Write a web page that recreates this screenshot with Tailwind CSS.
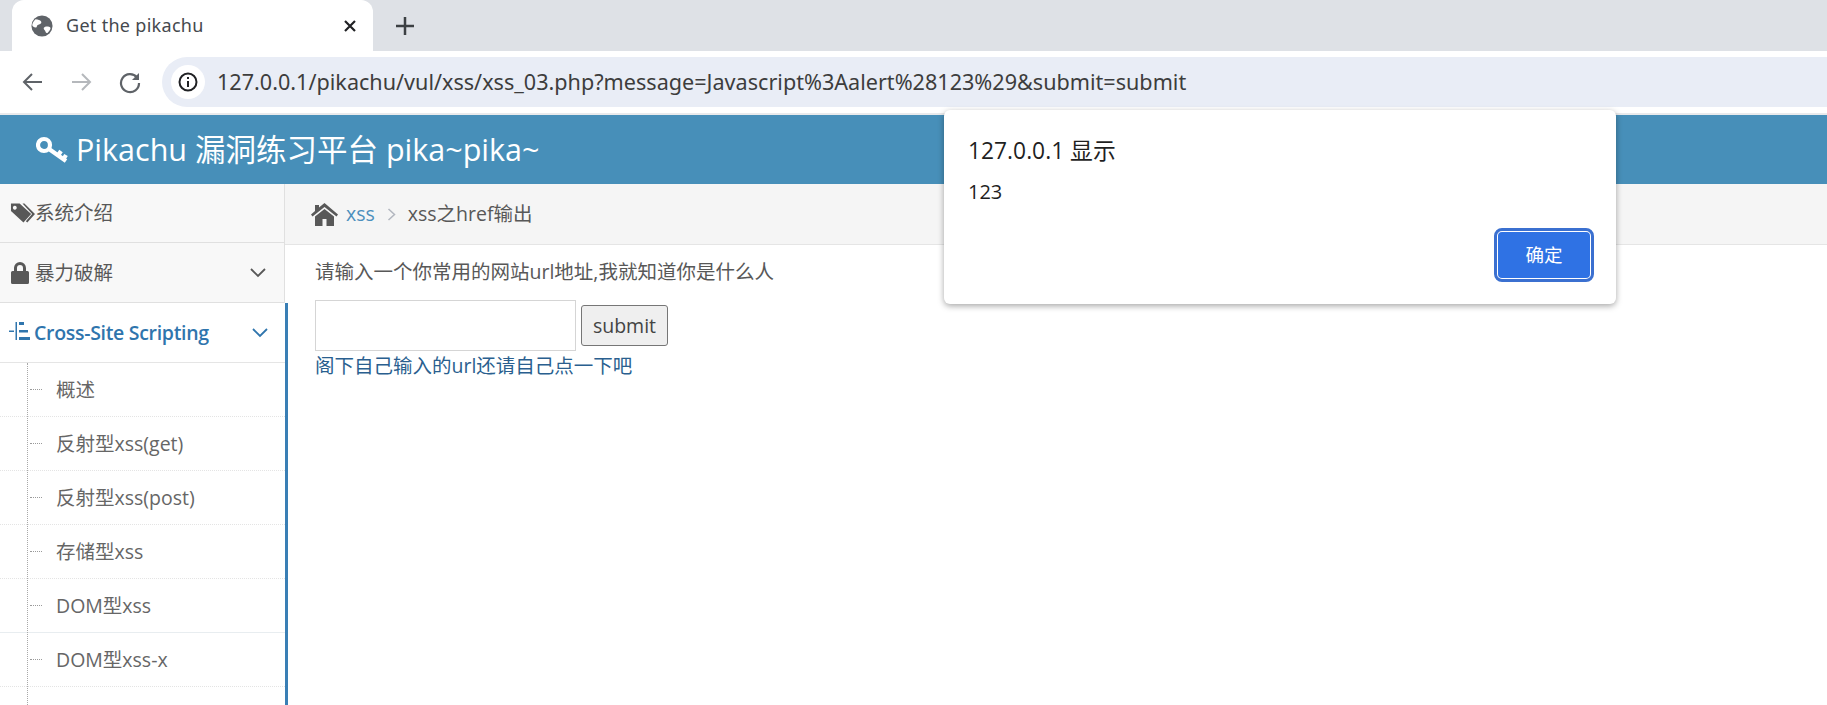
<!DOCTYPE html>
<html lang="zh">
<head>
<meta charset="UTF-8">
<title>Get the pikachu</title>
<script src="https://cdn.jsdelivr.net/npm/@tailwindcss/browser@4"></script>
</head>
<body class="relative w-[1827px] h-[705px] overflow-hidden bg-white font-['Open_Sans','Noto_Sans_CJK_SC',sans-serif] text-[#585858]">

<!-- tab strip -->
<div class="h-[51px] bg-[#dee1e6] flex items-end pl-[12px]">
  <div class="w-[361px] h-[51px] bg-white rounded-t-[12px] flex items-center pl-[19px] pr-[16px]">
    <svg class="w-[22px] h-[22px] shrink-0" viewBox="0 0 24 24"><circle cx="12" cy="12" r="11.500" fill="#5f6368"/><path d="M5 4.500c3 .5 5 .5 6 2.500s-1 3-3 3.500-1 3-3 3-3-1-3.500-2 1-5 3.500-7zM15 13c2-1 5-.5 6 .5s-1 4-3 6c-2 1-2-2-3-3s-2-2.500 0-3.500z" fill="#fff"/></svg>
    <span class="ml-[13px] text-[18px] text-[#45494e] font-['Noto_Sans',sans-serif] tracking-[0.3px]">Get the pikachu</span>
    <svg class="ml-auto w-[14px] h-[14px]" viewBox="0 0 14 14"><path d="M2 2l10 10M12 2L2 12" stroke="#202124" stroke-width="2.200"/></svg>
  </div>
  <svg class="ml-[22px] mb-[15px] w-[20px] h-[20px] self-end" viewBox="0 0 20 20"><path d="M10 1v18M1 10h18" stroke="#3c4043" stroke-width="2.500"/></svg>
</div>

<!-- toolbar -->
<div class="h-[64px] bg-white flex items-center pl-[22px] border-b-[2px] border-[#dadce0]/60">
  <svg class="w-[22px] h-[22px]" viewBox="0 0 22 22" fill="none" stroke="#5f6368" stroke-width="2"><path d="M20 11H3M10 3l-8 8 8 8"/></svg>
  <svg class="ml-[26px] w-[22px] h-[22px]" viewBox="0 0 22 22" fill="none" stroke="#b5b8bc" stroke-width="2"><path d="M2 11h17M12 3l8 8-8 8"/></svg>
  <svg class="ml-[26px] w-[24px] h-[24px]" viewBox="0 0 24 24"><path d="M19 7.500A9 9 0 1 0 21 13" fill="none" stroke="#5f6368" stroke-width="2.200"/><path d="M21 3v7h-7z" fill="#5f6368"/></svg>
  <div class="ml-[20px] flex-1 h-[50px] bg-[#e9edf6] rounded-l-[25px] flex items-center pl-[9px]">
    <div class="w-[34px] h-[34px] rounded-full bg-white flex items-center justify-center">
      <svg class="w-[20px] h-[20px]" viewBox="0 0 20 20"><circle cx="10" cy="10" r="8.500" fill="none" stroke="#202124" stroke-width="2"/><path d="M9 9h2v6H9zM9 5h2v2H9z" fill="#202124"/></svg>
    </div>
    <span class="ml-[12px] text-[21.600px] text-[#3d3d3d] font-['Noto_Sans',sans-serif]">127.0.0.1/pikachu/vul/xss/xss_03.php?message=Javascript%3Aalert%28123%29&amp;submit=submit</span>
  </div>
</div>

<!-- site header -->
<div class="h-[69px] bg-[#478fb9] flex items-center pl-[36px] text-white">
  <svg class="w-[33px] h-[28px] shrink-0" viewBox="0 0 33 28" fill="none" stroke="#fff" stroke-width="4.200"><circle cx="8" cy="9" r="6"/><path d="M13 13l17 12M22 19.500l3-4.500M27.500 23l2.500-4"/></svg>
  <span class="ml-[7px] text-[30.500px]">Pikachu 漏洞练习平台 pika~pika~</span>
</div>

<div class="flex h-[521px]">
  <!-- sidebar -->
  <div class="w-[288px] shrink-0 overflow-hidden flex flex-col">
    <div class="h-[59px] shrink-0 w-[285px] bg-[#f8f8f8] border-b border-r border-[#e0e0e0] flex items-center pl-[10px] text-[19.500px] text-[#585858]">
      <svg class="w-[25px] h-[22px] shrink-0" viewBox="0 0 26 22"><path fill="#585858" d="M1 1h9l12 11-8 9L1 9zM5 3.500a2 2 0 1 0 .01 0z" fill-rule="evenodd"/><path fill="#585858" d="M13 1h2l11 11-8 9-1.500-1.500L23 12z"/></svg>
      <span>系统介绍</span>
    </div>
    <div class="h-[60px] shrink-0 w-[285px] bg-[#f8f8f8] border-b border-r border-[#e0e0e0] flex items-center pl-[11px] pr-[18px] text-[19.500px]">
      <svg class="w-[18px] h-[22px] shrink-0" viewBox="0 0 18 22"><path fill="#585858" d="M3 9V6a6 6 0 0 1 12 0v3h1.500A1.500 1.500 0 0 1 18 10.500v10a1.500 1.500 0 0 1-1.500 1.500h-15A1.500 1.500 0 0 1 0 20.500v-10A1.500 1.500 0 0 1 1.500 9zm3 0h6V6a3 3 0 0 0-6 0z"/></svg>
      <span class="ml-[6px]">暴力破解</span>
      <svg class="ml-auto w-[16px] h-[10px]" viewBox="0 0 16 10" fill="none" stroke="#585858" stroke-width="1.800"><path d="M1 1l7 7 7-7"/></svg>
    </div>
    <div class="flex-1 border-r-[3px] border-[#3a7fb5] flex flex-col relative">
      <div class="h-[60px] shrink-0 border-b border-[#e5e5e5] flex items-center pl-[9px] pr-[17px] text-[#2f75ad] text-[19.500px] font-semibold tracking-[-0.3px]">
        <svg class="w-[26px] h-[20px] shrink-0 mb-[4px]" viewBox="0 0 26 20" fill="#2f75ad"><path d="M0 9.500h5V11H0zM6.500 1H8v18H6.500zM10 1h5v3h-5zM10 9h9v2.500h-9zM10 16h11v3H10z"/></svg>
        <span class="ml-[-1px]">Cross-Site Scripting</span>
        <svg class="ml-auto w-[16px] h-[10px]" viewBox="0 0 16 10" fill="none" stroke="#2f75ad" stroke-width="1.800"><path d="M1 1l7 7 7-7"/></svg>
      </div>
      <div class="absolute left-[27px] top-[60px] bottom-0 border-l border-dotted border-[#a8a8a8]"></div>
      <div class="h-[54px] shrink-0 border-b border-dotted border-[#e4e4e4] flex items-center text-[19.500px] text-[#666]"><span class="ml-[30px] w-[12px] border-t border-dotted border-[#9a9a9a]"></span><span class="ml-[14px]">概述</span></div>
      <div class="h-[54px] shrink-0 border-b border-dotted border-[#e4e4e4] flex items-center text-[19.500px] text-[#666]"><span class="ml-[30px] w-[12px] border-t border-dotted border-[#9a9a9a]"></span><span class="ml-[14px]">反射型xss(get)</span></div>
      <div class="h-[54px] shrink-0 border-b border-dotted border-[#e4e4e4] flex items-center text-[19.500px] text-[#666]"><span class="ml-[30px] w-[12px] border-t border-dotted border-[#9a9a9a]"></span><span class="ml-[14px]">反射型xss(post)</span></div>
      <div class="h-[54px] shrink-0 border-b border-dotted border-[#e4e4e4] flex items-center text-[19.500px] text-[#666]"><span class="ml-[30px] w-[12px] border-t border-dotted border-[#9a9a9a]"></span><span class="ml-[14px]">存储型xss</span></div>
      <div class="h-[54px] shrink-0 border-b border-[#e8edf0] flex items-center text-[19.500px] text-[#666]"><span class="ml-[30px] w-[12px] border-t border-dotted border-[#9a9a9a]"></span><span class="ml-[14px]">DOM型xss</span></div>
      <div class="h-[54px] shrink-0 border-b border-dotted border-[#e4e4e4] flex items-center text-[19.500px] text-[#666]"><span class="ml-[30px] w-[12px] border-t border-dotted border-[#9a9a9a]"></span><span class="ml-[14px]">DOM型xss-x</span></div>
    </div>
  </div>

  <!-- main -->
  <div class="flex-1 min-w-0 -ml-[3px]">
    <div class="h-[61px] bg-[#f5f5f5] border-b border-[#e5e5e5] flex items-center pl-[26px] text-[19.500px]">
      <svg class="w-[27px] h-[23px] shrink-0" viewBox="0 0 27 23"><path fill="#585858" d="M13.500 0 27 11.500l-1.500 2L13.500 4 1.500 13.500l-1.500-2 4-3.500V2h4v2.500zM13.500 6 23 13.500V23h-7.500v-7h-4v7H4v-9.500z"/></svg>
      <span class="ml-[8px] text-[#4c8fbd]">xss</span>
      <svg class="ml-[12px] w-[9px] h-[13px]" viewBox="0 0 9 13" fill="none" stroke="#b2b6bf" stroke-width="1.500"><path d="M1.500 1l6 5.500-6 5.500"/></svg>
      <span class="ml-[12px]">xss之href输出</span>
    </div>
    <div class="pl-[30px]">
      <p class="mt-[13px] h-[27px] leading-[27px] text-[19.500px]">请输入一个你常用的网站url地址,我就知道你是什么人</p>
      <form class="mt-[15px] flex items-center">
        <input type="text" class="w-[261px] h-[51px] bg-white border border-[#d5d5d5]">
        <button type="button" class="ml-[5px] w-[87px] h-[41px] bg-[#efefef] border border-[#767676] rounded-[3px] text-[19.500px] text-[#444]">submit</button>
      </form>
      <a class="block h-[29px] leading-[29px] text-[19.500px] text-[#2a5f8f]">阁下自己输入的url还请自己点一下吧</a>
    </div>
  </div>
</div>

<!-- alert dialog -->
<div class="absolute left-[944px] top-[110px] w-[672px] h-[194px] bg-white rounded-[6px] shadow-[0_2px_6px_rgba(0,0,0,0.35)] pl-[24px] pr-[24px] text-[#1f1f1f]">
  <div class="pt-[26px] text-[22.800px] leading-[30px]">127.0.0.1 显示</div>
  <div class="mt-[13px] text-[20px] leading-[26px]">123</div>
  <div class="absolute right-[24px] bottom-[24px] w-[96px] h-[50px] bg-[#2f72e4] rounded-[6px] border-[2px] border-white outline-[3px] outline-[#3b70d0] -outline-offset-[1px] flex items-center justify-center text-white text-[18.500px]">确定</div>
</div>

</body>
</html>
